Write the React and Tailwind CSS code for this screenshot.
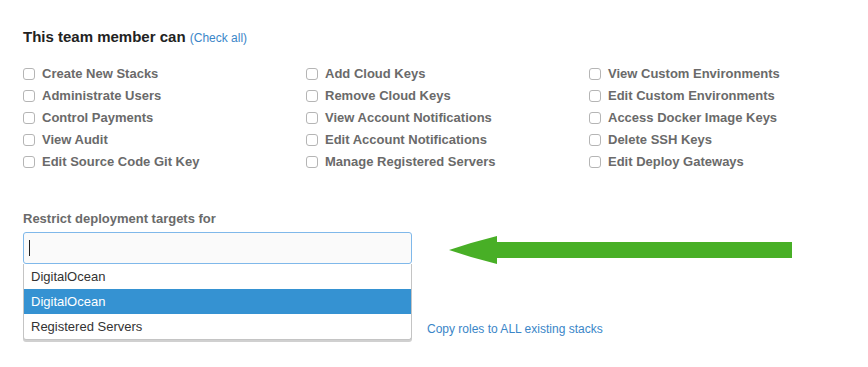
import { useState } from 'react';

const permissions = [
	['Create New Stacks', 'Add Cloud Keys', 'View Custom Environments'],
	['Administrate Users', 'Remove Cloud Keys', 'Edit Custom Environments'],
	['Control Payments', 'View Account Notifications', 'Access Docker Image Keys'],
	['View Audit', 'Edit Account Notifications', 'Delete SSH Keys'],
	['Edit Source Code Git Key', 'Manage Registered Servers', 'Edit Deploy Gateways'],
];

const targets = ['DigitalOcean', 'DigitalOcean', 'Registered Servers'];

function Permission({ label }) {
	return (
		<label className="flex items-center h-[22px] gap-[7px]">
			<span className="w-[12px] h-[12px] rounded-[3px] border border-[#b5b5b5] bg-white shrink-0" />
			<span className="text-[13px] font-bold text-[#6a6a6a]">{label}</span>
		</label>
	);
}

export default function App() {
	const [selected, setSelected] = useState(1);

	return (
		<div className="w-[868px] h-[367px] bg-white pl-[23px] pt-[28px] font-['Liberation_Sans',Arial,sans-serif]">
			<h3 className="text-[15px] font-bold text-[#222] leading-[18px]">
				This team member can{' '}
				<a className="text-[12px] font-normal text-[#3a86c8]">(Check all)</a>
			</h3>

			<div className="grid grid-cols-[283px_283px_1fr] mt-[16px]">
				{permissions.map((row) => row.map((p) => <Permission key={p} label={p} />))}
			</div>

			<div className="mt-[38px] text-[13px] font-bold text-[#6a6a6a] leading-[16px]">
				Restrict deployment targets for
			</div>

			<div className="flex items-start mt-[5px]">
				<div className="w-[389px]">
					<div className="h-[32px] rounded-[3px] border border-[#7fb8ea] bg-[#fafafa] flex items-center px-[5px]">
						<span className="w-px h-[16px] bg-[#222]" />
					</div>
					<div className="border border-t-0 border-[#c4c4c4] rounded-b-[3px] bg-white shadow-[0_2px_0_#d0d0d0]">
						{targets.map((t, i) => (
							<div
								key={i}
								onMouseEnter={() => setSelected(i)}
								className={`h-[25px] flex items-center px-[7px] text-[13px] ${
									selected === i ? 'bg-[#3592d2] text-white' : 'text-[#333]'
								}`}
							>
								{t}
							</div>
						))}
					</div>
				</div>

				<div className="flex flex-col ml-[15px]">
					<svg width="346" height="30" viewBox="0 0 346 30" className="ml-[22px] mt-[4px]">
						<polygon
							points="0,14 22,7 48,0 48,6 343,6 343,22 48,22 48,28 22,21"
							fill="#48af26"
						/>
					</svg>
					<a className="mt-[54px] text-[12px] text-[#3a86c8]">Copy roles to ALL existing stacks</a>
				</div>
			</div>
		</div>
	);
}
